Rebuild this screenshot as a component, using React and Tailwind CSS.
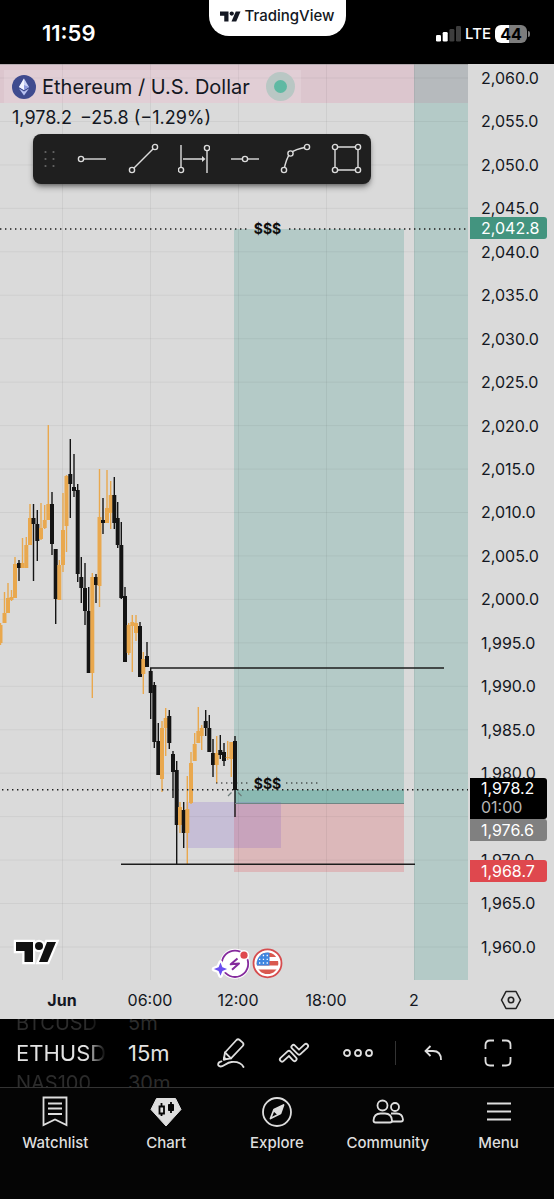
import React from "react";

const PRICES = [
  "2,060.0", "2,055.0", "2,050.0", "2,045.0", "2,040.0", "2,035.0", "2,030.0",
  "2,025.0", "2,020.0", "2,015.0", "2,010.0", "2,005.0", "2,000.0", "1,995.0",
  "1,990.0", "1,985.0", "1,980.0", "", "1,970.0", "1,965.0", "1,960.0",
];

const TIMES = ["Jun", "06:00", "12:00", "18:00", "2"];

// [x, high, low, body top, body bottom, rising]
const CANDLES = [
  [0.5, 623, 645, 625, 643, 1],
  [4.5, 592, 623, 613, 623, 1],
  [8, 583, 613, 598, 613, 1],
  [11.5, 590, 601, 597, 600, 1],
  [15, 557, 598, 564, 598, 1],
  [19, 560, 581, 563, 568, 0],
  [22.5, 538, 568, 563, 568, 1],
  [26.3, 537, 568, 545, 568, 1],
  [30, 504, 545, 518, 545, 1],
  [33.5, 504, 581, 518, 524, 0],
  [37.3, 510, 561, 524, 541, 0],
  [41, 503, 540, 528, 539, 1],
  [44.7, 505, 529, 520, 528, 1],
  [48.3, 425, 520, 504, 520, 1],
  [52, 492, 555, 504, 544, 0],
  [55.7, 549, 624, 549, 599, 0],
  [59.3, 560, 600, 565, 600, 1],
  [63, 493, 572, 530, 565, 1],
  [66.5, 475, 552, 476, 526, 1],
  [70.3, 439, 518, 474, 484, 0],
  [74, 454, 497, 487, 491, 0],
  [77.7, 484, 582, 490, 574, 0],
  [81.3, 557, 603, 577, 588, 0],
  [85, 563, 625, 588, 611, 0],
  [88.7, 587, 673, 611, 673, 0],
  [92.3, 573, 698, 577, 673, 1],
  [96, 574, 603, 577, 585, 0],
  [99.5, 469, 607, 517, 586, 1],
  [103, 498, 534, 520, 523, 0],
  [107, 470, 523, 508, 523, 1],
  [110.7, 481, 529, 495, 513, 1],
  [114.3, 477, 529, 495, 523, 0],
  [117.7, 502, 548, 518, 545, 0],
  [121.3, 522, 599, 545, 598, 0],
  [125, 587, 662, 596, 662, 0],
  [128.7, 623, 655, 625, 653, 1],
  [132.3, 615, 672, 622, 626, 1],
  [136, 615, 641, 623, 633, 1],
  [140, 622, 677, 626, 677, 0],
  [143.3, 652, 694, 659, 674, 1],
  [147, 642, 667, 656, 667, 0],
  [150.7, 668, 719, 671, 693, 0],
  [154.3, 682, 748, 685, 742, 0],
  [158.3, 723, 775, 741, 775, 0],
  [162, 721, 792, 728, 779, 1],
  [165.7, 708, 756, 718, 728, 1],
  [169.3, 710, 749, 716, 743, 0],
  [173, 751, 798, 754, 772, 0],
  [176.7, 761, 864, 770, 825, 0],
  [180, 802, 833, 807, 825, 1],
  [183.7, 802, 848, 810, 833, 0],
  [187.3, 776, 865, 809, 833, 1],
  [191, 752, 804, 763, 803, 1],
  [194.7, 733, 761, 744, 761, 1],
  [198.3, 707, 743, 731, 743, 1],
  [201.7, 725, 750, 728, 736, 1],
  [205.7, 710, 736, 721, 728, 0],
  [209.3, 715, 752, 728, 752, 0],
  [213, 739, 777, 753, 765, 0],
  [216.7, 736, 783, 753, 765, 1],
  [220.3, 735, 759, 750, 755, 0],
  [224, 743, 766, 752, 761, 0],
  [227.7, 741, 760, 757, 758, 1],
  [231.3, 742, 777, 742, 759, 1],
  [235, 736, 817, 741, 790, 0],
];

function TvMark({ className }) {
  return (
    <svg viewBox="0 0 42 22" className={className} aria-hidden="true">
      <path d="M0 1h17v20H8.500V9.500H0z" fill="currentColor" />
      <circle cx="23.500" cy="5.200" r="4.300" fill="currentColor" />
      <path d="M31.500 1H41l-8.500 20H23z" fill="currentColor" />
    </svg>
  );
}

function StatusBar() {
  return (
    <header className="grid h-16 grid-cols-[1fr_137px_1fr] bg-black text-white">
      <div className="pt-[18px] pl-[42px] text-[22px] leading-[30px] font-semibold">11:59</div>
      <div className="flex h-9 items-center justify-center gap-1 rounded-b-[20px] bg-white pb-1 text-[#131722]">
        <TvMark className="h-[11px] w-[21px]" />
        <span className="text-[15px] leading-6 font-medium">TradingView</span>
      </div>
      <div className="flex h-[68px] items-center justify-end gap-1 pr-6">
        <svg viewBox="0 0 25 16" className="h-4 w-[25px]" aria-hidden="true">
          <rect x="0" y="9" width="5" height="6.500" rx="1.300" fill="#fff" />
          <rect x="6.700" y="6" width="5" height="9.500" rx="1.300" fill="#fff" />
          <rect x="13.400" y="3" width="5" height="12.500" rx="1.300" fill="#3d3d3d" />
          <rect x="20" y="0" width="5" height="15.500" rx="1.300" fill="#3d3d3d" />
        </svg>
        <span className="text-[15px] leading-5 font-medium">LTE</span>
        <div className="flex items-center gap-px">
          <div className="flex h-[18px] w-8 items-center justify-center rounded-md bg-[linear-gradient(90deg,#fff_44%,#7d7d7d_44%)] text-base leading-4 font-bold text-black">
            44
          </div>
          <div className="h-1.5 w-0.5 rounded-r bg-[#7d7d7d]" />
        </div>
      </div>
    </header>
  );
}

function ChartDrawing() {
  return (
    <svg viewBox="0 64 468 916" className="block h-auto w-full" role="img" aria-label="ETHUSD 15 minute candles">
      <rect x="0" y="64" width="468" height="39" fill="#e66494" fillOpacity="0.17" />
      <g fill="#0c8773" fillOpacity="0.18">
        <rect x="234" y="229" width="170" height="574" />
        <rect x="235" y="790" width="169" height="13" fillOpacity="0.25" />
        <rect x="414" y="64" width="54" height="916" />
      </g>
      <rect x="234" y="803" width="170" height="69" fill="#e8323c" fillOpacity="0.2" />
      <rect x="186" y="802" width="95" height="46" fill="#7a50c8" fillOpacity="0.2" />
      <g stroke="#000" strokeOpacity="0.05">
        {PRICES.map((p, i) => (
          <line key={i} x1="0" x2="468" y1={78 + i * 43.450} y2={78 + i * 43.450} />
        ))}
        {TIMES.map((t, i) => (
          <line key={t} x1={62.500 + i * 88} x2={62.500 + i * 88} y1="64" y2="980" />
        ))}
      </g>
      <line x1="0" x2="468" y1="64.500" y2="64.500" stroke="#8c8c8c" strokeOpacity="0.5" />
      {CANDLES.map(([x, high, low, top, bottom, up]) => (
        <g key={x} fill={up ? "#e9a84e" : "#141414"}>
          <rect x={x - 0.7} y={high} width="1.400" height={low - high} />
          <rect x={x - 2} y={top} width="4" height={bottom - top} />
        </g>
      ))}
      <line x1="235" x2="404" y1="803.500" y2="803.500" stroke="#6f8583" />
      <g stroke="#1c1c1c" strokeWidth="1.500">
        <line x1="150" x2="444" y1="668" y2="668" />
        <line x1="121" x2="415" y1="864.300" y2="864.300" />
      </g>
      <g stroke="#1c1c1c" strokeWidth="1.400" strokeDasharray="1.400 3.600">
        <line x1="0" x2="250" y1="229" y2="229" />
        <line x1="289" x2="468" y1="229" y2="229" />
        <line x1="2" x2="468" y1="789.700" y2="789.700" />
        <line x1="216" x2="250" y1="783" y2="783" strokeOpacity="0.7" />
        <line x1="286" x2="320" y1="783" y2="783" strokeOpacity="0.7" />
      </g>
      <path d="M231.500 792.500l-3.500 3.500M238 792.500l3.500 3.500" stroke="#6d7c7a" strokeWidth="1.200" />
      <g className="font-[Inter,sans-serif] text-sm font-bold" fill="#101010" textAnchor="middle">
        <text x="267.500" y="234">$$$</text>
        <text x="267.500" y="789">$$$</text>
      </g>

      <g stroke="#fff" strokeWidth="4.500" strokeLinejoin="miter" fill="#fff">
        <path d="M16 942h17v20h-8.500V951H16z" />
        <circle cx="39" cy="946" r="4" />
        <path d="M47 942h9l-8.500 20H39z" />
      </g>
      <g fill="#111">
        <path d="M16 942h17v20h-8.500V951H16z" />
        <circle cx="39" cy="946" r="4" />
        <path d="M47 942h9l-8.500 20H39z" />
      </g>

      <circle cx="235" cy="963.800" r="15" fill="#fff" />
      <circle cx="235" cy="963.800" r="13.200" fill="none" stroke="#852b9d" strokeWidth="1.800" />
      <circle cx="244" cy="955.200" r="5.200" fill="#fff" />
      <path d="M220.500 962.500l1.900 4.700 4.700 1.900-4.700 1.900-1.900 4.700-1.900-4.700-4.700-1.900 4.700-1.900z" fill="#fff" stroke="#fff" strokeWidth="4.500" strokeLinejoin="round" />
      <circle cx="244" cy="955.200" r="3.600" fill="#df484e" />
      <path d="M220.500 962.500l1.900 4.700 4.700 1.900-4.700 1.900-1.900 4.700-1.900-4.700-4.700-1.900 4.700-1.900z" fill="#6a4ff0" />
      <path d="M237.500 958.500l-6.800 5.800 8.300-.8-7 6.300" fill="none" stroke="#852b9d" strokeWidth="2" strokeLinejoin="round" />

      <circle cx="267.500" cy="963.300" r="14" fill="#fff" stroke="#d64c4e" strokeWidth="1.800" />
      <clipPath id="flag"><circle cx="267.500" cy="963.300" r="10.800" /></clipPath>
      <g clipPath="url(#flag)">
        <rect x="256" y="952" width="24" height="23" fill="#fff" />
        <g fill="#d9594f">
          <rect x="256" y="952.500" width="24" height="4.500" />
          <rect x="256" y="961" width="24" height="4.500" />
          <rect x="256" y="969.500" width="24" height="5" />
        </g>
        <rect x="256" y="952" width="13.500" height="13.500" fill="#3f86e0" />
        <g stroke="#fff" strokeWidth="1.300" strokeDasharray="1.300 2.500">
          <path d="M259 955.500h10M259 959.300h10M259 963h10" />
        </g>
      </g>
    </svg>
  );
}

function Node({ x, y }) {
  return <circle cx={x} cy={y} r="2.600" fill="#1f1f1f" />;
}

const TOOLS = [
  { name: "Horizontal ray", art: <><path d="M5 16h25" /><Node x={5} y={16} /></> },
  { name: "Trend line", art: <><path d="M5 27L28 4" /><Node x={5} y={27} /><Node x={28} y={4} /></> },
  {
    name: "Date range",
    art: (
      <>
        <path d="M3 2v25M29 5v25M5 16h21" />
        <path d="M24 13l3.500 3-3.500 3z" fill="#dcdcdc" stroke="none" />
        <Node x={3} y={27} /><Node x={29} y={5} />
      </>
    ),
  },
  { name: "Horizontal line", art: <><path d="M3 16h28" /><Node x={17} y={16} /></> },
  { name: "Curve", art: <><path d="M5 27q2-11 6-16.500Q16 6 28 4" /><Node x={5} y={27} /><Node x={11.5} y={10.5} /><Node x={28} y={4} /></> },
  {
    name: "Rectangle",
    art: (
      <>
        <path d="M5 4h23v23H5z" />
        <Node x={5} y={4} /><Node x={28} y={4} /><Node x={5} y={27} /><Node x={28} y={27} />
      </>
    ),
  },
];

function DrawingTools() {
  return (
    <div className="flex h-[50px] w-[338px] items-center rounded-lg bg-[#1f1f1f] shadow-md shadow-black/40">
      <svg viewBox="0 0 34 20" className="h-5 w-[34px]" fill="#666" aria-hidden="true">
        {[3, 10, 17].map((y) => (
          <g key={y}>
            <circle cx="12.500" cy={y} r="1.100" />
            <circle cx="20.500" cy={y} r="1.100" />
          </g>
        ))}
      </svg>
      {TOOLS.map((tool) => (
        <button key={tool.name} aria-label={tool.name} className="flex flex-1 justify-center">
          <svg viewBox="0 0 32 32" className="size-8" fill="none" stroke="#dcdcdc" strokeWidth="1.400">
            {tool.art}
          </svg>
        </button>
      ))}
    </div>
  );
}

function Legend() {
  return (
    <div className="absolute inset-x-0 top-0 pt-1.5">
      <div className="ml-1 flex h-[33px] w-fit items-center bg-white/15 pr-1.5 pl-2">
        <svg viewBox="0 0 24 24" className="size-6" aria-hidden="true">
          <circle cx="12" cy="12" r="12" fill="#3f4b8f" />
          <path d="M12 3.500l5 8.500-5 3-5-3z" fill="#c9d0f5" />
          <path d="M12 3.500v11.500l-5-3z" fill="#f1f3ff" />
          <path d="M12 10l5 2-5 3z" fill="#8c98dd" />
          <path d="M7 13.500l5 3 5-3-5 7z" fill="#b9c2f2" />
        </svg>
        <h1 className="ml-1.5 text-xl leading-6 text-[#131722]">Ethereum / U.S. Dollar</h1>
        <span className="ml-4 flex size-[29px] items-center justify-center rounded-full bg-[#b9c7c4]">
          <span className="size-[13px] rounded-full bg-[#5fb9a3]" />
        </span>
      </div>
      <p className="mt-[3px] flex gap-2 pl-3 text-lg leading-6 text-[#131722]">
        <span>1,978.2</span>
        <span>−25.8 (−1.29%)</span>
      </p>
      <div className="mt-1 ml-[33px]">
        <DrawingTools />
      </div>
    </div>
  );
}

function PriceAxis() {
  return (
    <aside className="relative w-[86px] shrink-0 text-base text-[#131722]">
      <div className="flex h-full flex-col justify-between pt-1 pb-[23px] pl-[13px] leading-5">
        {PRICES.map((p, i) => <span key={i} className="h-5">{p}</span>)}
      </div>
      <div className="absolute top-[153px] left-0.5 w-[77px] rounded-r-[3px] bg-[#43947f] pl-[11px] leading-[22px] text-white">2,042.8</div>
      <div className="absolute top-[714px] left-0.5 flex w-[77px] flex-col text-white">
        <div className="flex h-[41px] flex-col rounded-r-[3px] bg-black pt-px pl-[11px] leading-[19px]">
          <span>1,978.2</span>
          <span className="text-[#b5b5b5]">01:00</span>
        </div>
        <div className="rounded-r-[3px] bg-[#808080] pl-[11px] leading-[22px]">1,976.6</div>
        <div className="mt-[19px] rounded-r-[3px] bg-[#df484e] pl-[11px] leading-[22px]">1,968.7</div>
      </div>
    </aside>
  );
}

function TimeAxis() {
  return (
    <div className="flex h-[39px] items-center text-base text-[#131722]">
      <div className="grid flex-1 grid-cols-5 pr-2.5 pl-[18px] text-center">
        {TIMES.map((t, i) => (
          <span key={t} className={i === 0 ? "font-bold" : ""}>{t}</span>
        ))}
      </div>
      <button aria-label="Chart settings" className="flex w-[86px] justify-center">
        <svg viewBox="0 0 22 20" className="h-5 w-[22px]" fill="none" stroke="#222" strokeWidth="1.600">
          <path d="M6 1.500h10l4.500 8.500-4.500 8.500H6L1.500 10z" strokeLinejoin="round" />
          <circle cx="11" cy="10" r="2.700" />
        </svg>
      </button>
    </div>
  );
}

function Wheel({ items, className }) {
  return (
    <div className={`flex h-full flex-col justify-center overflow-hidden ${className}`}>
      <span className="shrink-0 text-xl leading-[30px] text-[#2c2c2c]">{items[0]}</span>
      <span className="shrink-0 text-[22px] leading-[30px] text-[#e3e3e3]">{items[1]}</span>
      <span className="shrink-0 text-xl leading-[30px] text-[#2c2c2c]">{items[2]}</span>
    </div>
  );
}

function ChartToolbar() {
  return (
    <div className="flex h-[69px] items-center border-b border-[#333] bg-black pl-4 text-[#dedede]">
      <Wheel items={["BTCUSD", "ETHUSD", "NAS100"]} className="w-[90px] [mask-image:linear-gradient(90deg,#000_78%,transparent)]" />
      <Wheel items={["5m", "15m", "30m"]} className="ml-[22px] w-[71px]" />
      <button aria-label="Draw" className="flex w-[63px] justify-center">
        <svg viewBox="0 0 28 30" className="h-[30px] w-7" fill="none" stroke="currentColor" strokeWidth="1.800" strokeLinejoin="round" strokeLinecap="round">
          <path d="M6.800 21.500L8 14.500 19.500 2q1.500-1.500 3.200 0l3 2.700q1.500 1.500 0 3.300L14 20.300z" />
          <path d="M8 14.500l6 5.800M6.800 21.500l2-.4-1.600-1.600z" />
          <path d="M4.500 23.300c-4 .5-4.500 5-1 5.200 3 .2 6-4 11-4.500 5-.4 10 1 12 5" />
        </svg>
      </button>
      <button aria-label="Indicators" className="flex w-[63px] justify-center">
        <svg viewBox="0 0 32 22" className="h-[22px] w-8" fill="none" strokeLinecap="round" strokeLinejoin="round">
          <path d="M15.500 5l5.500 5.500L28 4" stroke="currentColor" strokeWidth="6" />
          <path d="M15.500 5l5.500 5.500L28 4" stroke="#000" strokeWidth="2.400" />
          <path d="M4 17.500l7-6.500 5.500 6" stroke="currentColor" strokeWidth="6" />
          <path d="M4 17.500l7-6.500 5.500 6" stroke="#000" strokeWidth="2.400" />
        </svg>
      </button>
      <button aria-label="More" className="flex w-[65px] justify-center">
        <svg viewBox="0 0 30 10" className="h-2.5 w-[30px]" fill="none" stroke="currentColor" strokeWidth="1.800">
          <circle cx="4" cy="5" r="3" /><circle cx="15" cy="5" r="3" /><circle cx="26" cy="5" r="3" />
        </svg>
      </button>
      <div className="ml-[5px] h-6 w-px bg-[#333]" />
      <button aria-label="Undo" className="flex w-[74px] justify-center">
        <svg viewBox="0 0 18 16" className="h-4 w-[18px]" fill="none" stroke="currentColor" strokeWidth="1.800">
          <path d="M6.500 1L1.500 6l5 5M1.500 6H9q8 0 8 9" />
        </svg>
      </button>
      <button aria-label="Full screen" className="flex flex-1 justify-center pr-7">
        <svg viewBox="0 0 28 28" className="size-7" fill="none" stroke="currentColor" strokeWidth="1.800">
          <path d="M1.500 10V6q0-4.500 4.500-4.500h4M18 1.500h4q4.500 0 4.500 4.500v4M26.500 18v4q0 4.500-4.500 4.500h-4M10 26.500H6q-4.500 0-4.500-4.500v-4" />
        </svg>
      </button>
    </div>
  );
}

const TABS = [
  {
    name: "Watchlist",
    art: <><path d="M4.500 1.500h23v27.500L16 23.500 4.500 29z" /><path d="M9 7.500h14M9 12.500h14M9 18h14" /></>,
  },
  {
    name: "Chart",
    art: (
      <>
        <path d="M6.500 2.500h19L31 13.500 16 30 1 13.500z" fill="currentColor" stroke="currentColor" strokeWidth="1" />
        <path d="M11.500 7v3.500M11.500 17.500V20M21 6v3M21 14.500V17" stroke="#050505" />
        <path d="M9.500 10.500h4.500v7H9.500z" stroke="#050505" />
        <path d="M18.500 8.500h5v6h-5z" fill="#050505" stroke="#050505" strokeWidth="1" />
      </>
    ),
  },
  {
    name: "Explore",
    art: (
      <>
        <circle cx="16" cy="16" r="14" />
        <path d="M22.500 9l-3 8.500L9.500 22.500l3.500-9z" strokeLinejoin="round" />
        <path d="M23 8.500l-3.500 9-3 1.500-4.500-4 1.500-2z" fill="currentColor" stroke="none" />
      </>
    ),
  },
  {
    name: "Community",
    art: (
      <>
        <circle cx="10.500" cy="9.500" r="5" />
        <circle cx="23" cy="11" r="4" />
        <path d="M1.500 24.500q.5-7 7-7h4.500q6.500 0 7 7 0 2-2 2H3.500q-2 0-2-2z" />
        <path d="M19 17.500h5.500q6 0 6.500 6 0 2-2 2h-9" />
      </>
    ),
  },
  { name: "Menu", art: <path d="M4 7.500h24M4 15.500h24M4 23.500h24" /> },
];

function TabBar() {
  return (
    <nav className="grid h-[111px] grid-cols-5 bg-[#050505] pt-2 text-[#dedede]">
      {TABS.map((tab) => (
        <a key={tab.name} href="#" className="flex flex-col items-center gap-[5px]">
          <svg viewBox="0 0 32 32" className="size-8" fill="none" stroke="currentColor" strokeWidth="1.800">
            {tab.art}
          </svg>
          <span className="text-[15px] leading-5 font-medium">{tab.name}</span>
        </a>
      ))}
    </nav>
  );
}

export default function App() {
  return (
    <div className="bg-black font-[Inter,sans-serif]">
      <StatusBar />
      <main className="bg-[#dadada]">
        <div className="flex">
          <section className="relative flex-1">
            <ChartDrawing />
            <Legend />
          </section>
          <PriceAxis />
        </div>
        <TimeAxis />
      </main>
      <ChartToolbar />
      <TabBar />
    </div>
  );
}
